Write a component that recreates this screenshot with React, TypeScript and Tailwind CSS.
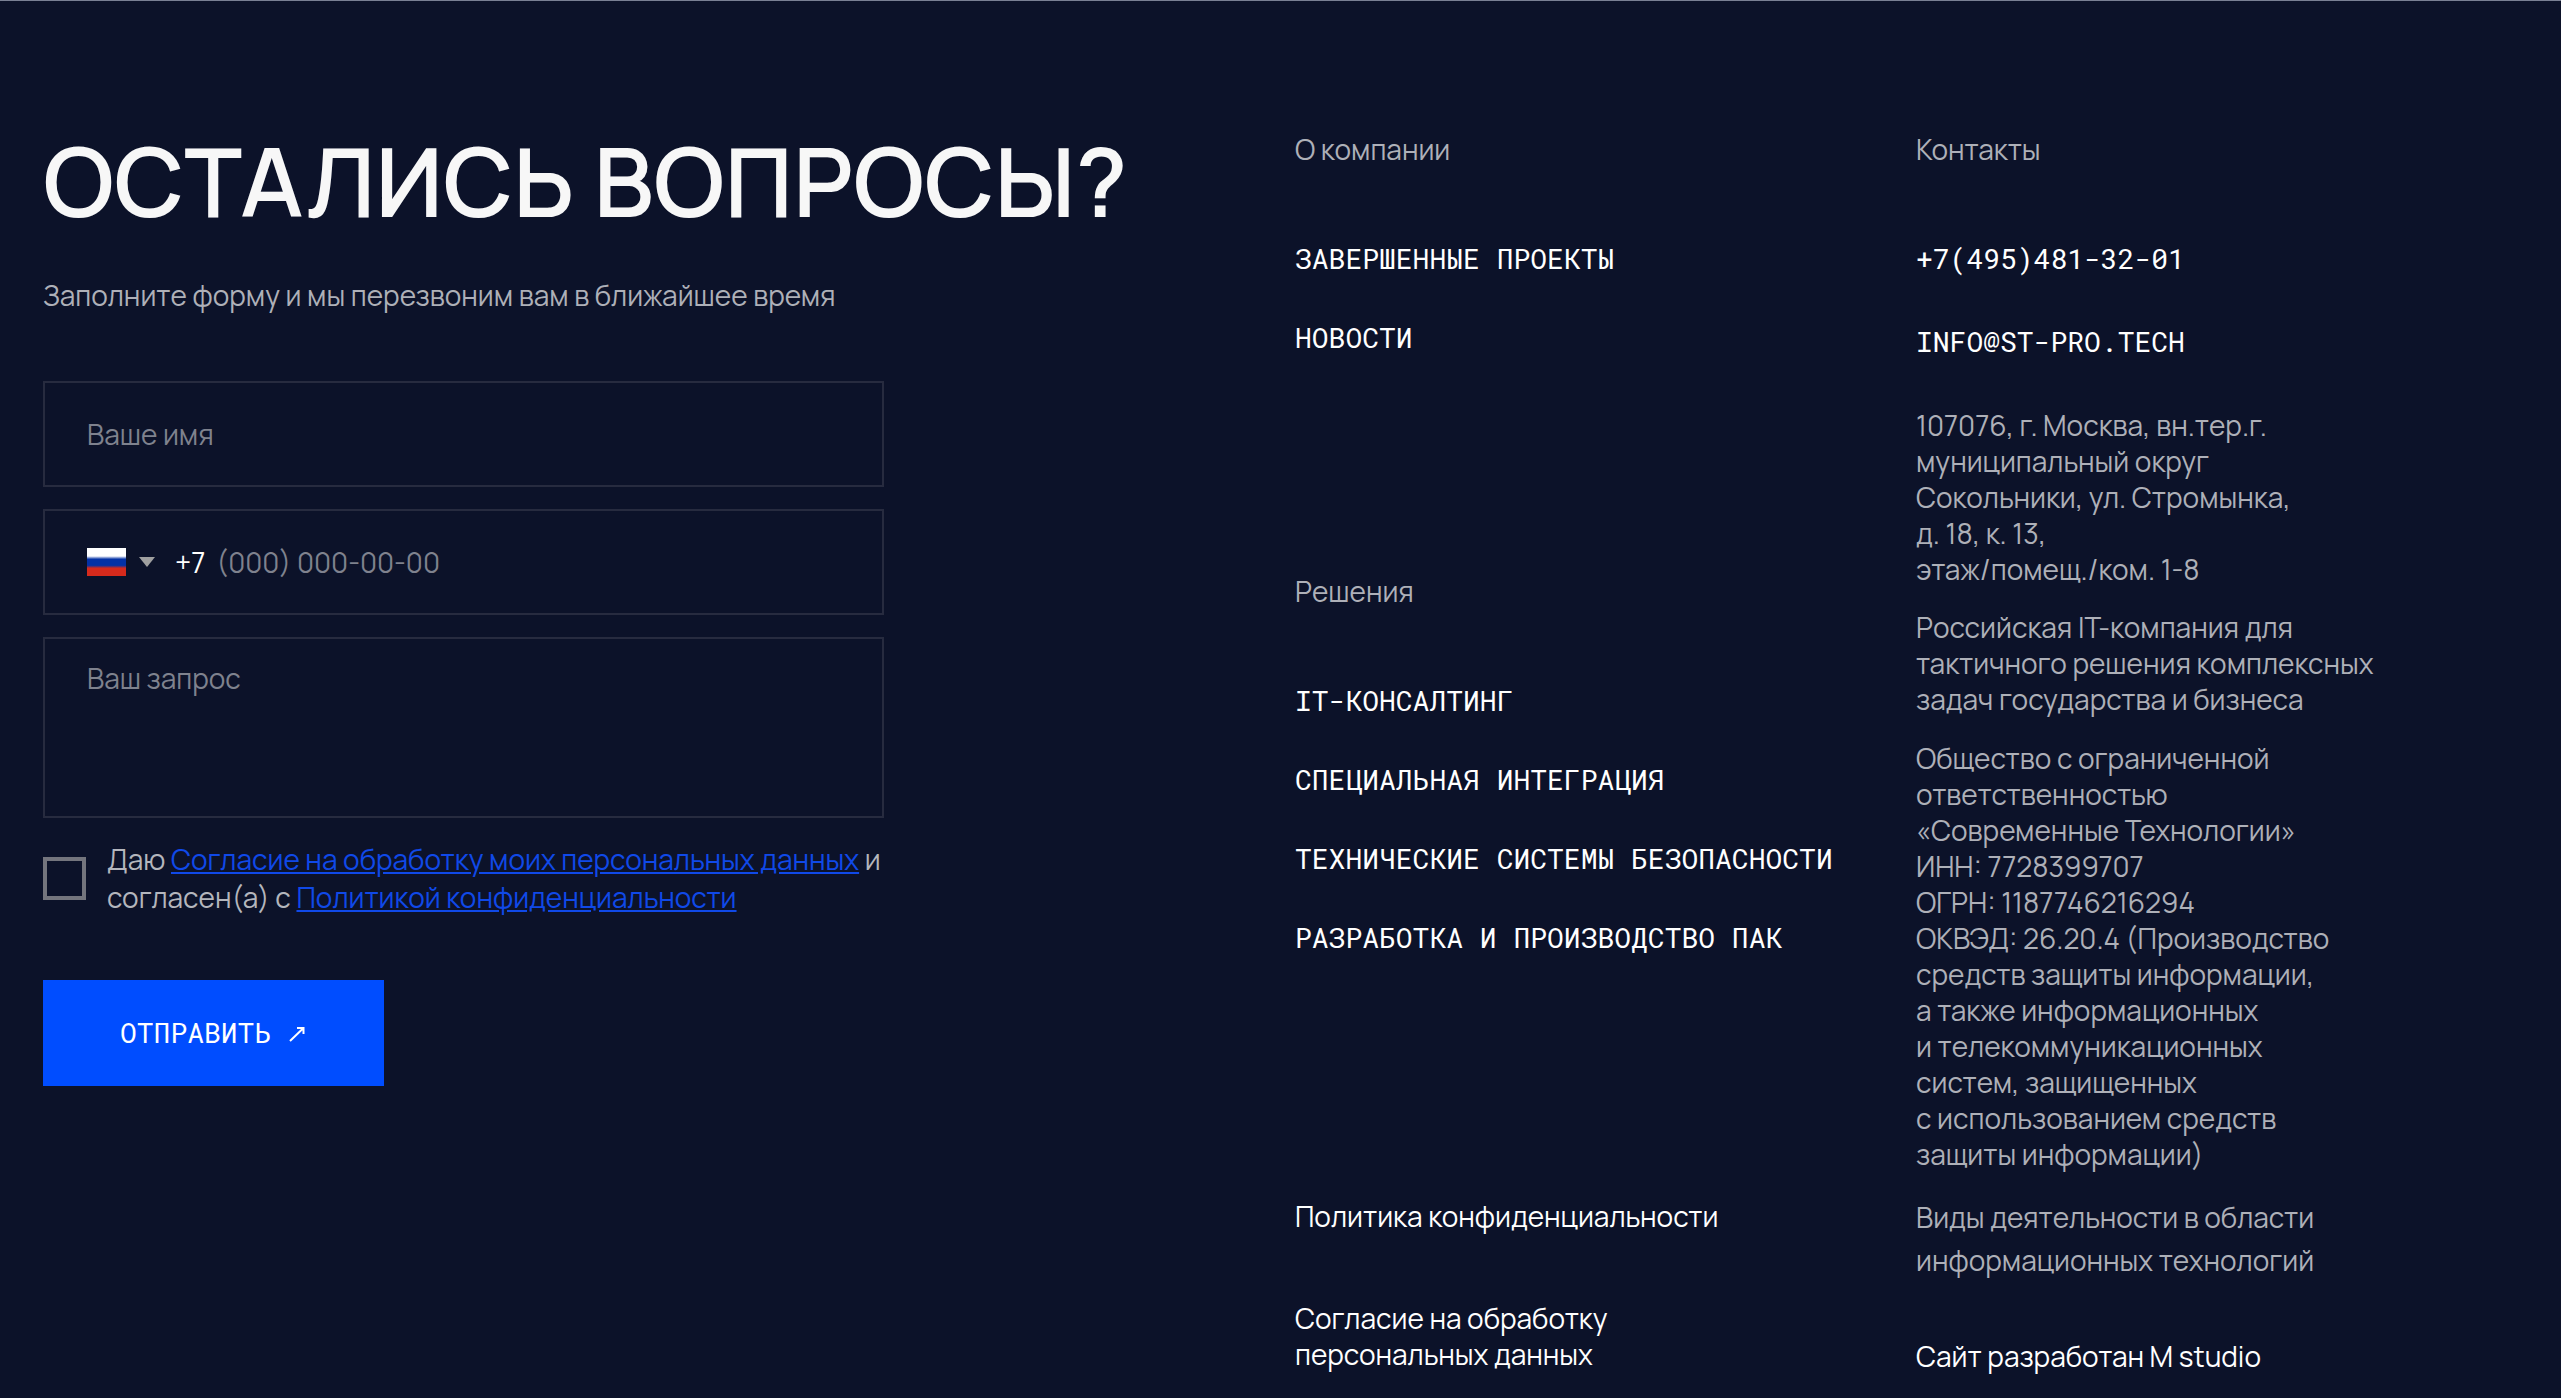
import React from 'react';

const companyLinks = ['Завершенные проекты', 'Новости'];

const solutionLinks = [
  'IT-консалтинг',
  'Специальная интеграция',
  'Технические системы безопасности',
  'Разработка и производство ПАК',
];

function LinkList({ title, links }: { title: string; links: string[] }) {
  return (
    <nav aria-label={title}>
      <h2 className="text-[#aeb0b8]">{title}</h2>
      <ul className="mt-[74px] flex flex-col gap-[43px] font-['Roboto_Mono','Liberation_Mono',monospace] uppercase">
        {links.map((link) => (
          <li key={link}>
            <a href="#" className="whitespace-nowrap">{link}</a>
          </li>
        ))}
      </ul>
    </nav>
  );
}

function RussianFlag() {
  return (
    <svg viewBox="0 0 39 28" className="h-7 w-[39px]" aria-hidden="true">
      <defs>
        <linearGradient id="flag" x1="0" y1="0" x2="0" y2="1">
          <stop offset="0.29" stopColor="#ffffff" />
          <stop offset="0.4" stopColor="#0432a6" />
          <stop offset="0.62" stopColor="#0432a6" />
          <stop offset="0.72" stopColor="#d62a1c" />
        </linearGradient>
      </defs>
      <rect width="39" height="28" fill="url(#flag)" />
    </svg>
  );
}

function ContactForm() {
  return (
    <form className="mt-[68px] flex w-full max-w-[841px] flex-col">
      <input
        type="text"
        aria-label="Ваше имя"
        placeholder="Ваше имя"
        className="h-[106px] border-2 border-[#272b3f] bg-transparent px-[42px] placeholder:text-[#7f828e]"
      />

      <div className="mt-[22px] flex h-[106px] items-center border-2 border-[#272b3f] px-[42px]">
        <button type="button" aria-label="Код страны" className="flex items-center gap-[13px]">
          <RussianFlag />
          <svg viewBox="0 0 16 10" className="h-[10px] w-4" aria-hidden="true">
            <path d="M0 0h16L8 10z" fill="#a0a0a0" />
          </svg>
        </button>
        <label htmlFor="phone" className="ml-5">+7</label>
        <input
          id="phone"
          type="tel"
          placeholder="(000) 000-00-00"
          className="ml-[11px] min-w-0 flex-1 bg-transparent placeholder:text-[#7f828e]"
        />
      </div>

      <textarea
        aria-label="Ваш запрос"
        placeholder="Ваш запрос"
        className="mt-[22px] h-[181px] resize-none border-2 border-[#272b3f] bg-transparent px-[42px] py-[21px] placeholder:text-[#7f828e]"
      />

      <div className="mt-[22px] flex items-center gap-[21px]">
        <input
          id="agree"
          type="checkbox"
          className="size-[43px] shrink-0 appearance-none border-4 border-[#74757d]"
        />
        <label htmlFor="agree" className="whitespace-nowrap leading-[38px] text-[#b4b6bd]">
          Даю{' '}
          <a href="#" className="text-[#1049e8] underline">Согласие на обработку моих персональных данных</a>{' '}
          и<br />
          согласен(а) с{' '}
          <a href="#" className="text-[#1049e8] underline">Политикой конфиденциальности</a>
        </label>
      </div>

      <button
        type="submit"
        className="mt-[64px] flex h-[106px] items-center gap-[18px] self-start bg-[#004dff] px-[77px] font-['Roboto_Mono','Liberation_Mono',monospace] uppercase"
      >
        Отправить
        <svg viewBox="0 0 18 18" className="size-[18px]" fill="none" stroke="currentColor" strokeWidth="2" aria-hidden="true">
          <path d="M1 17 14 4.5M8 4h6.5v6" />
        </svg>
      </button>
    </form>
  );
}

function Contacts() {
  return (
    <address className="flex flex-col items-start text-[#aeb0b8] not-italic">
      <h2>Контакты</h2>
      <a
        href="tel:+74954813201"
        className="mt-[74px] font-['Roboto_Mono','Liberation_Mono',monospace] text-white"
      >
        +7(495)481-32-01
      </a>
      <a
        href="mailto:info@st-pro.tech"
        className="mt-[47px] font-['Roboto_Mono','Liberation_Mono',monospace] text-white uppercase"
      >
        info@st-pro.tech
      </a>
      <p className="mt-[47px]">
        107076, г. Москва, вн.тер.г.<br />
        муниципальный округ<br />
        Сокольники, ул. Стромынка,<br />
        д. 18, к. 13,<br />
        этаж/помещ./ком. 1-8
      </p>
      <p className="mt-[22px]">
        Российская IT-компания для<br />
        тактичного решения комплексных<br />
        задач государства и бизнеса
      </p>
      <p className="mt-[23px]">
        Общество с ограниченной<br />
        ответственностью<br />
        «Современные Технологии»<br />
        ИНН: 7728399707<br />
        ОГРН: 1187746216294<br />
        ОКВЭД: 26.20.4 (Производство<br />
        средств защиты информации,<br />
        а также информационных<br />
        и телекоммуникационных<br />
        систем, защищенных<br />
        с использованием средств<br />
        защиты информации)
      </p>
      <a href="#" className="mt-[24px] leading-[43px]">
        Виды деятельности в области<br />
        информационных технологий
      </a>
      <a href="#" className="mt-[56px] text-white">Сайт разработан M studio</a>
    </address>
  );
}

export default function App() {
  return (
    <footer className="grid min-h-screen grid-cols-[1252fr_621fr_645fr] border-t border-[#7a8094] bg-[#0c1229] pt-[130px] pl-[43px] font-['Manrope','Inter',sans-serif] text-[28px] leading-[36px] text-white">
      <section>
        <h1 className="text-[96px] leading-[100px] font-semibold whitespace-nowrap text-[#f7f7f7] uppercase">
          Остались вопросы?
        </h1>
        <p className="mt-[46px] text-[#aeb0b8]">
          Заполните форму и мы перезвоним вам в ближайшее время
        </p>
        <ContactForm />
      </section>

      <div className="flex flex-col">
        <LinkList title="О компании" links={companyLinks} />
        <div className="mt-[217px]">
          <LinkList title="Решения" links={solutionLinks} />
        </div>
        <a href="#" className="mt-[242px]">Политика конфиденциальности</a>
        <a href="#" className="mt-[66px]">
          Согласие на обработку<br />
          персональных данных
        </a>
      </div>

      <Contacts />
    </footer>
  );
}
